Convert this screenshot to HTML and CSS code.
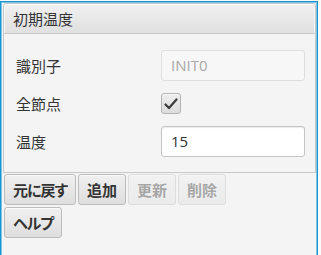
FILE: index.html
```html
<!DOCTYPE html>
<html lang="ja">
<head>
<meta charset="utf-8">
<link rel="stylesheet" href="styles.css">
</head>
<body>
<div class="frame">
  <section class="titled">
    <div class="title">初期温度</div>
    <div class="content">
      <div class="form">
        <span class="label">識別子</span>
        <div class="field disabled">INIT0</div>
        <span class="label">全節点</span>
        <div class="check-cell">
          <span class="checkbox">
            <svg width="14" height="12" viewBox="0 0 14 12"><path d="M1.5 6.5 L5 10 L12.5 1.5" fill="none" stroke="#3a3a3a" stroke-width="2.2" stroke-linecap="round" stroke-linejoin="round"/></svg>
          </span>
        </div>
        <span class="label">温度</span>
        <div class="field">15</div>
      </div>
    </div>
  </section>
  <div class="buttons">
    <button class="btn kana">元に戻す</button>
    <button class="btn">追加</button>
    <button class="btn" disabled>更新</button>
    <button class="btn" disabled>削除</button>
    <button class="btn kana">ヘルプ</button>
  </div>
</div>
</body>
</html>
```
FILE: styles.css
```css
html, body {
  margin: 0;
  padding: 0;
  background: #fafafa;
}
body {
  width: 321px;
  height: 255px;
  overflow: hidden;
  font-family: "Noto Sans CJK JP", "Open Sans", sans-serif;
  color: #333;
}
.frame {
  box-sizing: border-box;
  margin-top: 1px;
  width: 318px;
  height: 260px;
  border: 1px solid #1596d3;
  box-shadow: inset 0 0 0 1px #7cc4e8;
  background: #f4f4f4;
  padding: 1px 1px 0 2px;
}
.titled {
  display: flex;
  flex-direction: column;
}
.title {
  box-sizing: border-box;
  height: 31px;
  border: 1px solid #c6c6c6;
  border-radius: 3px 3px 0 0;
  background: linear-gradient(to bottom, #f1f1f1, #e0e0e0);
  box-shadow: inset 0 1px 0 #fdfdfd, inset 1px 0 0 #f8f8f8, inset -1px 0 0 #f8f8f8;
  padding-left: 9px;
  font-size: 15px;
  line-height: 30px;
  color: #333;
}
.content {
  border: 1px solid #c8c8c8;
  border-top: none;
  background: #f4f4f4;
  padding: 16px 10px 15px 12px;
}
.form {
  display: grid;
  grid-template-columns: 145px 144px;
  grid-template-rows: 31px 21px 31px;
  row-gap: 12px;
  align-items: center;
}
.label {
  font-size: 15px;
  color: #333;
}
.field {
  box-sizing: border-box;
  height: 31px;
  border: 1px solid #c4c4c4;
  border-radius: 3px;
  background: #fff;
  box-shadow: inset 0 1px 1px #ececec;
  padding-left: 9px;
  font-family: "Open Sans", sans-serif;
  font-size: 15px;
  line-height: 29px;
  color: #333;
}
.field.disabled {
  background: #f7f7f7;
  border-color: #dedede;
  box-shadow: none;
  color: #a8a8a8;
}
.check-cell {
  display: flex;
  align-items: center;
}
.checkbox {
  box-sizing: border-box;
  width: 20px;
  height: 21px;
  border: 1px solid #b4b4b4;
  border-radius: 3px;
  background: linear-gradient(to bottom, #eeeeee, #dcdcdc);
  box-shadow: inset 0 1px 0 #f8f8f8;
  display: flex;
  align-items: center;
  justify-content: center;
}
.buttons {
  display: flex;
  flex-wrap: wrap;
  gap: 2px;
  margin-top: 1px;
  padding-left: 1px;
  width: 230px;
}
.btn {
  box-sizing: border-box;
  height: 31px;
  padding: 0 8px;
  border: 1px solid #bcbcbc;
  border-radius: 3px;
  background: linear-gradient(to bottom, #f0f0f0, #dedede);
  box-shadow: inset 0 1px 0 #fafafa;
  font-family: "Noto Sans CJK JP", sans-serif;
  font-size: 15px;
  font-weight: 700;
  color: #333;
  line-height: 29px;
}
.btn.kana {
  font-feature-settings: "palt";
  letter-spacing: -1px;
}
.btn:disabled {
  opacity: 0.4;
}
```
